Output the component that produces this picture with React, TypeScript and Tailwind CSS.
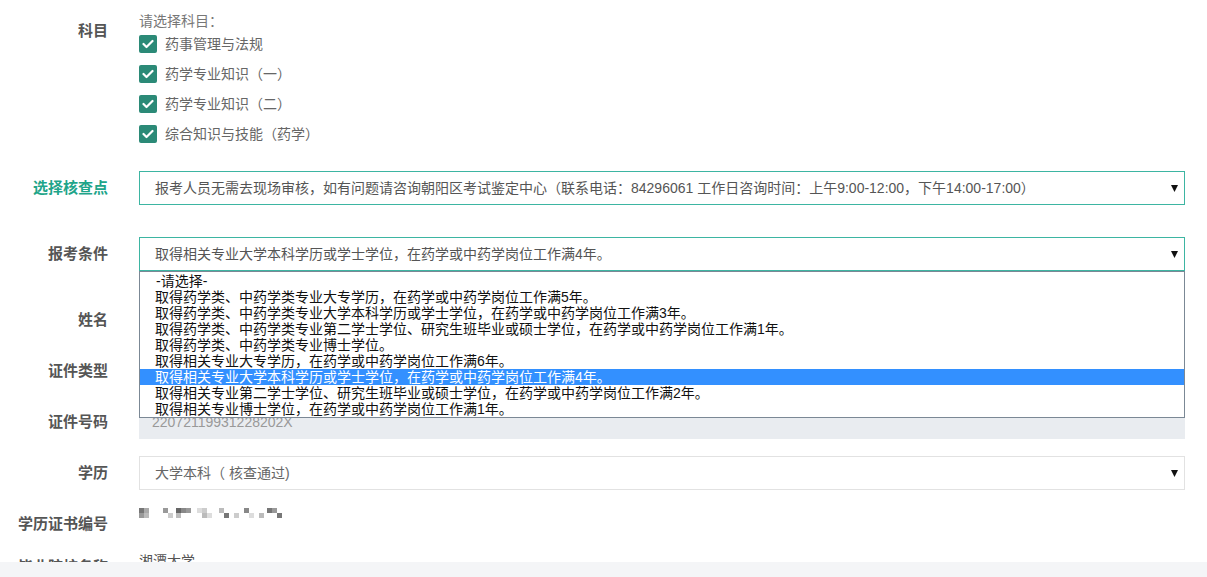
import React from "react";

const FONT = { fontFamily: '"Liberation Sans", "Noto Sans CJK SC", sans-serif' };

const subjects = [
  "药事管理与法规",
  "药学专业知识（一）",
  "药学专业知识（二）",
  "综合知识与技能（药学）",
];

const conditions = [
  "-请选择-",
  "取得药学类、中药学类专业大专学历，在药学或中药学岗位工作满5年。",
  "取得药学类、中药学类专业大学本科学历或学士学位，在药学或中药学岗位工作满3年。",
  "取得药学类、中药学类专业第二学士学位、研究生班毕业或硕士学位，在药学或中药学岗位工作满1年。",
  "取得药学类、中药学类专业博士学位。",
  "取得相关专业大专学历，在药学或中药学岗位工作满6年。",
  "取得相关专业大学本科学历或学士学位，在药学或中药学岗位工作满4年。",
  "取得相关专业第二学士学位、研究生班毕业或硕士学位，在药学或中药学岗位工作满2年。",
  "取得相关专业博士学位，在药学或中药学岗位工作满1年。",
];

/* ---------------- SMALL PARTS ---------------- */
const Arrow = () => (
  <svg width="7" height="7" viewBox="0 0 8 8" className="shrink-0">
    <polygon points="0,0 8,0 4,8" fill="#111" />
  </svg>
);

const CheckBox = () => (
  <span className="w-[18px] h-[18px] rounded-[2px] bg-[#2b8a77] flex items-center justify-center shrink-0">
    <svg width="12" height="10" viewBox="0 0 12 10">
      <polyline
        points="1.5,5 4.5,8 10.5,2"
        fill="none"
        stroke="#fff"
        strokeWidth="2.2"
        strokeLinecap="round"
        strokeLinejoin="round"
      />
    </svg>
  </span>
);

const Label = ({ children, teal }: { children: React.ReactNode; teal?: boolean }) => (
  <div
    className={`w-[108px] shrink-0 text-right text-[15px] font-bold leading-[18px] ${
      teal ? "text-[#1fa58a]" : "text-[#555]"
    }`}
  >
    {children}
  </div>
);

const SelectBox = ({
  text,
  border,
  color = "text-[#555]",
}: {
  text: string;
  border: string;
  color?: string;
}) => (
  <div
    className={`h-[34px] w-full border ${border} bg-white flex items-center justify-between pl-[15px] pr-[6px] text-[14px] ${color}`}
  >
    <span className="whitespace-nowrap">{text}</span>
    <Arrow />
  </div>
);

/* ---------------- MOSAIC (blurred number) ---------------- */
const Mosaic = () => {
  const cells: [number, number, string][] = [
    [0, 0, "#777"], [5, 0, "#aaa"], [0, 5, "#999"], [5, 5, "#bbb"],
    [24, 0, "#999"], [29, 5, "#ccc"], [37, 0, "#666"], [42, 0, "#888"], [47, 0, "#999"],
    [37, 5, "#bbb"], [58, 0, "#ddd"], [63, 0, "#ccc"], [63, 5, "#bbb"], [68, 5, "#ddd"],
    [80, 0, "#bbb"], [85, 5, "#777"], [95, 5, "#ccc"], [105, 0, "#888"], [110, 5, "#ddd"],
    [120, 5, "#bbb"], [128, 0, "#777"], [133, 0, "#999"], [138, 5, "#777"],
  ];
  return (
    <svg width="150" height="14" viewBox="0 0 150 14">
      {cells.map(([x, y, c], i) => (
        <rect key={i} x={x} y={y} width="5" height="5" fill={c} />
      ))}
    </svg>
  );
};

/* ---------------- MAIN PAGE ---------------- */
export default function App() {
  return (
    <div className="w-full h-[577px] flex flex-col bg-white overflow-hidden" style={FONT}>
      <div className="flex-1 min-h-0 overflow-hidden pt-[14px]">
        {/* 科目 */}
        <div className="flex gap-[31px]">
          <div className="pt-[8px]">
            <Label>科目</Label>
          </div>
          <div className="flex flex-col">
            <div className="text-[14px] leading-[15px] text-[#777]">请选择科目：</div>
            {subjects.map((s) => (
              <div key={s} className="h-[30px] flex items-center gap-[8px]">
                <CheckBox />
                <span className="text-[14px] text-[#666]">{s}</span>
              </div>
            ))}
          </div>
        </div>

        {/* 选择核查点 */}
        <div className="flex items-center gap-[31px] mt-[22px]">
          <Label teal>选择核查点</Label>
          <div className="w-[1046px]">
            <SelectBox
              border="border-[#3db5a2]"
              text="报考人员无需去现场审核，如有问题请咨询朝阳区考试鉴定中心（联系电话：84296061 工作日咨询时间：上午9:00-12:00，下午14:00-17:00）"
            />
          </div>
        </div>

        {/* 报考条件 */}
        <div className="flex items-center gap-[31px] mt-[32px] relative z-10">
          <Label>报考条件</Label>
          <div className="w-[1046px] relative">
            <SelectBox
              border="border-[#3db5a2]"
              text="取得相关专业大学本科学历或学士学位，在药学或中药学岗位工作满4年。"
            />
            <div className="absolute left-0 right-0 top-full border border-[#7b8895] bg-white pt-[1px]">
              {conditions.map((c, i) => (
                <div
                  key={c}
                  className={`h-[16px] leading-[16px] text-[14px] whitespace-nowrap pl-[15px] ${
                    i === 6 ? "bg-[#3390ff] text-white" : "text-[#111]"
                  }`}
                >
                  {i === 0 ? <span className="pl-[1px]">{c}</span> : c}
                </div>
              ))}
            </div>
          </div>
        </div>

        {/* 姓名 */}
        <div className="flex items-center gap-[31px] mt-[32px]">
          <Label>姓名</Label>
          <div className="w-[1046px] h-[34px] border border-[#ddd] bg-[#eceef1]" />
        </div>

        {/* 证件类型 */}
        <div className="flex items-center gap-[31px] mt-[17px]">
          <Label>证件类型</Label>
          <div className="w-[1046px] h-[34px] border border-[#ddd] bg-[#eceef1]" />
        </div>

        {/* 证件号码 */}
        <div className="flex items-center gap-[31px] mt-[17px]">
          <Label>证件号码</Label>
          <div className="w-[1046px] h-[34px] bg-[#e9ecf0] flex items-center pl-[13px] text-[14px] text-[#999]">
            22072119931228202X
          </div>
        </div>

        {/* 学历 */}
        <div className="flex items-center gap-[31px] mt-[17px]">
          <Label>学历</Label>
          <div className="w-[1046px]">
            <SelectBox border="border-[#e2e2e2]" color="text-[#666]" text="大学本科（ 核查通过)" />
          </div>
        </div>

        {/* 学历证书编号 */}
        <div className="flex gap-[31px] mt-[17px] h-[34px]">
          <div className="pt-[8px]">
            <Label>学历证书编号</Label>
          </div>
          <div className="pt-[1px]">
            <Mosaic />
          </div>
        </div>

        {/* 毕业院校 */}
        <div className="flex gap-[31px] mt-[11px]">
          <div className="pt-[6px]">
            <Label>毕业院校名称</Label>
          </div>
          <div className="text-[14px] text-[#555] leading-[18px]">湘潭大学</div>
        </div>
      </div>

      <div className="h-[15px] shrink-0 bg-[#f4f5f7]" />
    </div>
  );
}
